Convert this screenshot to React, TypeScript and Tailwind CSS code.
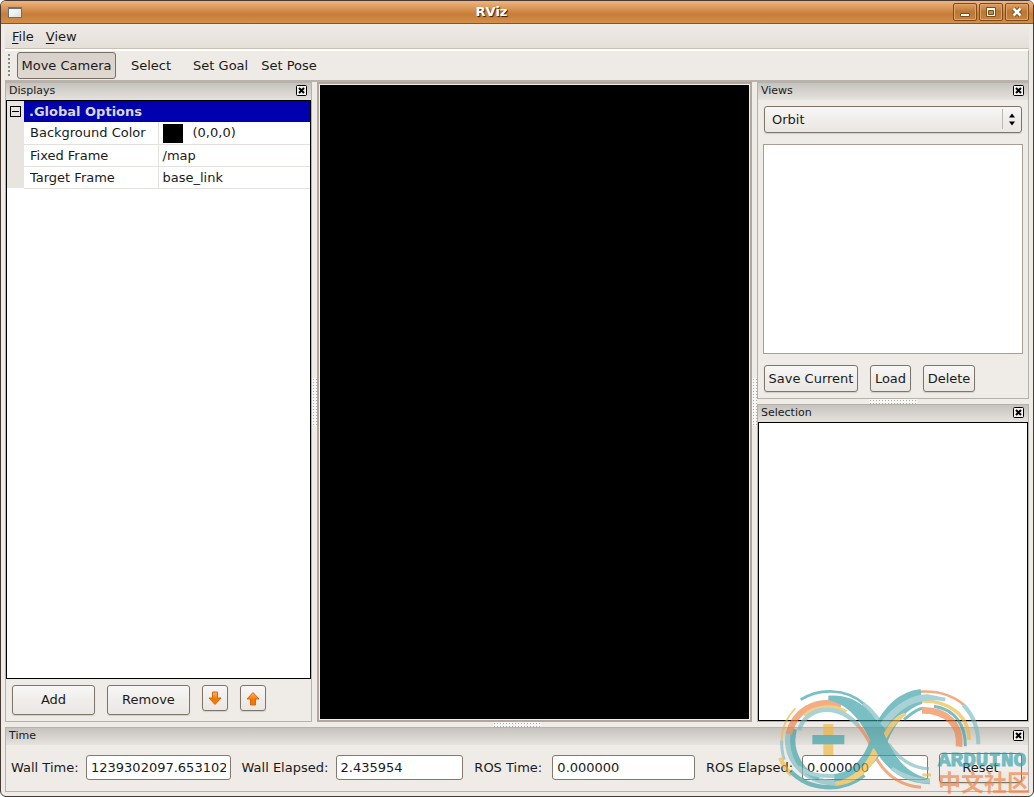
import { ReactNode } from 'react';
import clsx from 'clsx';

const TEAL = '#349ea6';
const LIGHT_TEAL = '#7bbbc0';
const YELLOW = '#eeb73d';
const ORANGE = '#ee8143';

const watermarkStrokes = [
    // left loop, outside in
    { d: 'M95 62 C150 28 230 26 285 75', color: TEAL, width: 8 },
    { d: 'M282 74 Q310 95 334 130', color: LIGHT_TEAL, width: 12 },
    { d: 'M79 88 Q38 130 38 185', color: YELLOW, width: 5 },
    { d: 'M38 184 Q37 215 46 242', color: LIGHT_TEAL, width: 9 },
    { d: 'M34 236 Q46 268 68 288', color: YELLOW, width: 13 },
    { d: 'M64 276 C120 336 220 341 286 288', color: TEAL, width: 13 },
    { d: 'M59 162 C45 230 95 308 200 312', color: LIGHT_TEAL, width: 17 },
    { d: 'M76 150 C58 215 95 282 150 297', color: TEAL, width: 16 },
    { d: 'M88 265 Q130 295 198 290', color: LIGHT_TEAL, width: 12 },
    { d: 'M59 165 C76 98 135 58 217 76', color: ORANGE, width: 19 },
    { d: 'M106 110 C135 80 195 76 232 99', color: YELLOW, width: 11 },
    { d: 'M90 154 C110 85 200 65 268 140', color: LIGHT_TEAL, width: 13 },
    { d: 'M266 138 Q290 165 306 200', color: ORANGE, width: 10 },
    // right loop, outside in
    { d: 'M455 38 C505 35 550 48 585 78', color: ORANGE, width: 8 },
    { d: 'M583 78 Q628 125 628 196', color: LIGHT_TEAL, width: 12 },
    { d: 'M459 66 C540 64 600 110 600 182', color: YELLOW, width: 11 },
    { d: 'M495 82 C560 92 590 140 589 202', color: TEAL, width: 9 },
    { d: 'M405 122 Q445 88 462 88', color: TEAL, width: 9 },
    { d: 'M459 94 C530 92 577 135 570 203', color: ORANGE, width: 20 },
    { d: 'M358 195 Q410 268 480 269', color: LIGHT_TEAL, width: 10 },
    { d: 'M322 238 Q368 318 456 325', color: ORANGE, width: 9 },
    { d: 'M460 288 H486', color: YELLOW, width: 9 },
];

const watermarkShapes = [
    // rising band
    { d: 'M455 30C390 38 345 82 314 150C300 205 268 278 196 285L196 308C285 305 325 245 352 195C380 130 412 88 460 74Z', color: TEAL },
    { d: 'M334 134C370 80 430 45 475 46L530 56L528 67C440 52 385 92 350 150Z', color: LIGHT_TEAL },
    { d: 'M200 309C260 295 292 255 312 208L334 215C305 275 265 315 200 321Z', color: YELLOW },
    { d: 'M338 175C355 140 375 112 405 101L413 108C385 126 368 150 352 180Z', color: YELLOW },
    // falling band
    { d: 'M178 50C260 43 310 95 340 153C372 225 405 285 483 299L483 316C390 312 342 258 308 195C280 125 235 75 178 64Z', color: TEAL },
    { d: 'M372 264Q420 297 483 301L483 314Q415 312 365 272Z', color: LIGHT_TEAL },
    // plus sign
    { d: 'M163 135h30v93h-30z', color: YELLOW },
    { d: 'M130 168h96v28h-96z', color: TEAL },
];

function Watermark() {
    return (
        <div className="pointer-events-none absolute right-0 bottom-0 h-[117px] w-[264px] opacity-65">
            <svg viewBox="0 0 792 351" className="absolute inset-0 size-full" fill="none" aria-hidden="true">
                {watermarkStrokes.map((stroke) => (
                    <path key={stroke.d} d={stroke.d} stroke={stroke.color} strokeWidth={stroke.width} />
                ))}
                {watermarkShapes.map((shape) => (
                    <path key={shape.d} d={shape.d} fill={shape.color} />
                ))}
            </svg>
            <div className="absolute right-1 bottom-1 w-[91px] whitespace-nowrap">
                <div className="font-['Liberation_Mono',monospace] text-[21px] leading-[18px] font-bold text-[#349ea6] [-webkit-text-stroke:1px_#349ea6]">ARDUINO</div>
                <div className="font-['Noto_Sans_CJK_SC',sans-serif] text-[23px] leading-[22px] font-bold text-[#ee8143]">中文社区</div>
            </div>
        </div>
    );
}

function CloseButton({ label }: { label: string }) {
    return (
        <button aria-label={label} className="size-[11px]">
            <svg viewBox="0 0 11 11" className="size-full" fill="none" stroke="#000">
                <rect x="0.5" y="0.5" width="10" height="10" rx="1" fill="#f4f2f0" />
                <path d="M3 3l5 5M8 3l-5 5" strokeWidth="2" />
            </svg>
        </button>
    );
}

function Panel({ title, className, children }: { title: string; className?: string; children: ReactNode }) {
    return (
        <section className={clsx('flex flex-col border border-[#b5b1ab]', className)}>
            <header className="flex h-[17px] shrink-0 items-center justify-between bg-linear-to-b from-[#c6c2be] to-[#e6e2de] pr-1 pb-[2px] pl-[3px]">
                <h2 className="text-[11px] leading-[15px]">{title}</h2>
                <CloseButton label={`Close ${title}`} />
            </header>
            {children}
        </section>
    );
}

function Button({ children, className, label }: { children: ReactNode; className?: string; label?: string }) {
    return (
        <button
            aria-label={label}
            className={clsx(
                'flex items-center justify-center rounded-[3px] border border-[#7d756a] bg-linear-to-b from-[#f8f7f6] via-[#f0eeeb] via-50% to-[#ebe7e3] shadow-[0_1px_1px_#d2cec8]',
                className,
            )}
        >
            {children}
        </button>
    );
}

function Sash({ vertical = false }: { vertical?: boolean }) {
    return (
        <div className={clsx('flex shrink-0 items-center justify-center', vertical ? 'w-[5px]' : 'h-[5px]')}>
            <div
                className={clsx(
                    'bg-[radial-gradient(#aaa6a0_1px,#f8f7f5_1px)] bg-size-[3px_3px]',
                    vertical ? 'h-[48px] w-[5px]' : 'h-[5px] w-[48px]',
                )}
            />
        </div>
    );
}

function Arrow({ up = false }: { up?: boolean }) {
    return (
        <svg viewBox="0 0 14 15" className={clsx('h-[15px] w-[14px]', up && 'rotate-180')}>
            <defs>
                <linearGradient id={up ? 'arrow-up' : 'arrow-down'} x1="0" y1={up ? '1' : '0'} x2="0" y2={up ? '0' : '1'}>
                    <stop offset="0" stopColor="#fcb36b" />
                    <stop offset="0.55" stopColor="#f57900" />
                </linearGradient>
            </defs>
            <path d="M4.500 1h5v6h3.500L7 13.500 1 7h3.500z" fill={up ? 'url(#arrow-up)' : 'url(#arrow-down)'} stroke="#d8690f" />
        </svg>
    );
}

function TitleBar() {
    const buttonClass = 'flex h-[18px] w-6 items-center justify-center rounded-[2px] border border-[#7d4c1c] bg-linear-to-b from-[#e0a162] via-[#b97733] via-50% to-[#c9853f] shadow-[inset_0_0_0_1px_#dca470]';
    return (
        <div className="flex h-[23px] shrink-0 items-center border-b border-[#8a5524] bg-linear-to-b from-[#f0b57c] via-[#c67e38] via-60% to-[#d48f4b] pr-1 pl-[7px]">
            <div className="h-[11px] w-[14px] border border-t-2 border-[#5f7387] bg-linear-to-br from-white to-[#dcdcdc]" />
            <h1 className="flex-1 pl-2 text-center text-[13px] leading-[20px] font-bold text-white [text-shadow:1px_1px_1px_#2c1c10]">RViz</h1>
            <div className="flex gap-[2px]">
                <button aria-label="Minimize" className={buttonClass}>
                    <svg viewBox="0 0 14 14" className="size-[14px]"><path d="M2.500 8.500h9v3h-9z" fill="#fff" stroke="#7d4c1c" /></svg>
                </button>
                <button aria-label="Maximize" className={buttonClass}>
                    <svg viewBox="0 0 14 14" className="size-[14px]" fill="none">
                        <path d="M2.500 2.500h9v9h-9z" fill="#fff" stroke="#7d4c1c" />
                        <path d="M4.500 5.500h5v4h-5z" fill="#c9853f" stroke="#7d4c1c" />
                    </svg>
                </button>
                <button aria-label="Close" className={buttonClass}>
                    <svg viewBox="0 0 14 14" className="size-[14px]" fill="none">
                        <path d="M3.500 3.500l7 7M10.500 3.500l-7 7" stroke="#7d4c1c" strokeWidth="4.500" />
                        <path d="M3.500 3.500l7 7M10.500 3.500l-7 7" stroke="#fff" strokeWidth="2.500" />
                    </svg>
                </button>
            </div>
        </div>
    );
}

const options = [
    { name: 'Background Color', value: '(0,0,0)', swatch: true },
    { name: 'Fixed Frame', value: '/map' },
    { name: 'Target Frame', value: 'base_link' },
];

function DisplaysPanel() {
    return (
        <Panel title="Displays" className="w-[307px] shrink-0">
            <div className="flex-1 border border-black bg-white">
                <table className="w-full table-fixed border-collapse">
                    <colgroup>
                        <col className="w-[17px]" />
                        <col className="w-[134px]" />
                        <col />
                    </colgroup>
                    <tbody>
                        <tr className="h-[21px]">
                            <td className="bg-[#e8e5e0] p-0">
                                <button aria-label="Collapse" className="mx-auto flex size-[11px] items-center justify-center border border-black">
                                    <span className="h-px w-[7px] bg-black" />
                                </button>
                            </td>
                            <th colSpan={2} className="bg-[#0000ae] p-0 pl-[5px] text-left leading-[20px] font-bold text-[#d8d8d8]">
                                .Global Options
                            </th>
                        </tr>
                        {options.map((option) => (
                            <tr key={option.name} className="h-[22px]">
                                <td className="bg-[#e8e5e0] p-0" />
                                <td className="border-r border-b border-[#e4e1dc] p-0 pt-px pl-[6px] leading-[20px]">{option.name}</td>
                                <td className="border-b border-[#e4e1dc] p-0 pt-px pl-1 leading-[20px]">
                                    <div className="flex items-center gap-[10px]">
                                        {option.swatch && <span className="h-[19px] w-5 bg-black" />}
                                        {option.value}
                                    </div>
                                </td>
                            </tr>
                        ))}
                    </tbody>
                </table>
            </div>
            <div className="flex h-[42px] shrink-0 items-start gap-3 px-[6px] pt-[6px]">
                <Button className="h-[30px] w-[83px]">Add</Button>
                <Button className="h-[30px] w-[83px]">Remove</Button>
                <Button className="size-[26px]" label="Move down"><Arrow /></Button>
                <Button className="size-[26px]" label="Move up"><Arrow up /></Button>
            </div>
        </Panel>
    );
}

function ViewsPanel() {
    return (
        <Panel title="Views" className="h-[317px] shrink-0">
            <div className="flex flex-1 flex-col px-[5px] pt-[6px] pb-[6px]">
                <div className="relative mx-px">
                    <select
                        aria-label="View type"
                        className="h-[27px] w-full appearance-none rounded-[3px] border border-[#7d756a] bg-linear-to-b from-[#f8f7f6] via-[#f0eeeb] via-50% to-[#ebe7e3] px-[7px] shadow-[0_1px_1px_#d2cec8]"
                        defaultValue="Orbit"
                    >
                        <option>Orbit</option>
                    </select>
                    <svg viewBox="0 0 20 21" className="pointer-events-none absolute top-[3px] right-0 h-[21px] w-5">
                        <path d="M0.500 0v20" stroke="#bcb7b0" />
                        <path d="M7 8.500l3-4 3 4zM7 12.500l3 4 3-4z" fill="#000" />
                    </svg>
                </div>
                <div className="mt-[11px] flex-1 border border-[#ab9d91] bg-white" />
                <div className="mx-px mt-[11px] flex gap-3">
                    <Button className="h-[27px] w-[94px]">Save Current</Button>
                    <Button className="h-[27px] w-[41px]">Load</Button>
                    <Button className="h-[27px] w-[52px]">Delete</Button>
                </div>
            </div>
        </Panel>
    );
}

const timeFields = [
    { id: 'wall-time', label: 'Wall Time:', value: '1239302097.653102', labelClass: 'w-[75px]', inputClass: 'flex-[145]' },
    { id: 'wall-elapsed', label: 'Wall Elapsed:', value: '2.435954', labelClass: 'w-[94px]', inputClass: 'flex-[127]' },
    { id: 'ros-time', label: 'ROS Time:', value: '0.000000', labelClass: 'w-[78px]', inputClass: 'flex-[143]' },
    { id: 'ros-elapsed', label: 'ROS Elapsed:', value: '0.000000', labelClass: 'w-[96px]', inputClass: 'flex-[125]' },
];

function TimePanel() {
    return (
        <Panel title="Time" className="h-[65px] shrink-0">
            <div className="flex flex-1 items-center gap-[11px] pr-[6px] pb-px pl-[5px]">
                {timeFields.map((field) => (
                    <div key={field.id} className="contents">
                        <label htmlFor={field.id} className={clsx('-mr-[11px] shrink-0 whitespace-nowrap', field.labelClass)}>
                            {field.label}
                        </label>
                        <input
                            id={field.id}
                            defaultValue={field.value}
                            className={clsx('h-[25px] min-w-0 rounded-[3px] border border-[#85796d] bg-white px-1', field.inputClass)}
                        />
                    </div>
                ))}
                <Button className="h-[30px] w-[83px] shrink-0">Reset</Button>
            </div>
        </Panel>
    );
}

export default function App() {
    return (
        <div className="bg-white font-['DejaVu_Sans',sans-serif] text-[13px] leading-[20px] text-[#1a1a1a]">
            <div className="relative flex min-h-screen flex-col overflow-hidden rounded-[6px] border border-[#473a34] bg-[#efebe7]">
                <TitleBar />
                <nav className="mx-1 flex h-[25px] shrink-0 items-center gap-3 border-b border-[#cbbfb1] bg-linear-to-b from-[#efebe7] to-[#e4dfd8] px-[7px] pt-px">
                    <button><span className="underline underline-offset-2">F</span>ile</button>
                    <button><span className="underline underline-offset-2">V</span>iew</button>
                </nav>
                <div className="mx-1 flex h-[33px] shrink-0 items-center border-t-2 border-r border-b-2 border-t-white border-r-[#b5b1ab] border-b-[#b9b1ab] bg-[#eeebe6] pl-[3px]">
                    <div className="h-[23px] w-[2px] bg-[repeating-linear-gradient(#8d8983_0_2px,transparent_2px_4px)]" />
                    <button className="ml-[7px] h-[27px] w-[99px] rounded-[3px] border border-[#786e64] bg-linear-to-b from-[#d8d0ca] to-[#e0d9d2]">Move Camera</button>
                    <button className="ml-[15px]">Select</button>
                    <button className="ml-[22px]">Set Goal</button>
                    <button className="ml-[13px]">Set Pose</button>
                </div>
                <main className="mx-1 flex flex-1">
                    <DisplaysPanel />
                    <Sash vertical />
                    <div className="flex flex-1 border-2 border-[#b3a79d]">
                        <div className="flex-1 border border-[#f5f0e4] bg-black" />
                    </div>
                    <Sash vertical />
                    <div className="flex w-[272px] shrink-0 flex-col">
                        <ViewsPanel />
                        <Sash />
                        <Panel title="Selection" className="flex-1">
                            <div className="flex-1 border border-black bg-white" />
                        </Panel>
                    </div>
                </main>
                <div className="mx-1 mb-1 flex shrink-0 flex-col">
                    <Sash />
                    <TimePanel />
                </div>
                <Watermark />
            </div>
        </div>
    );
}
